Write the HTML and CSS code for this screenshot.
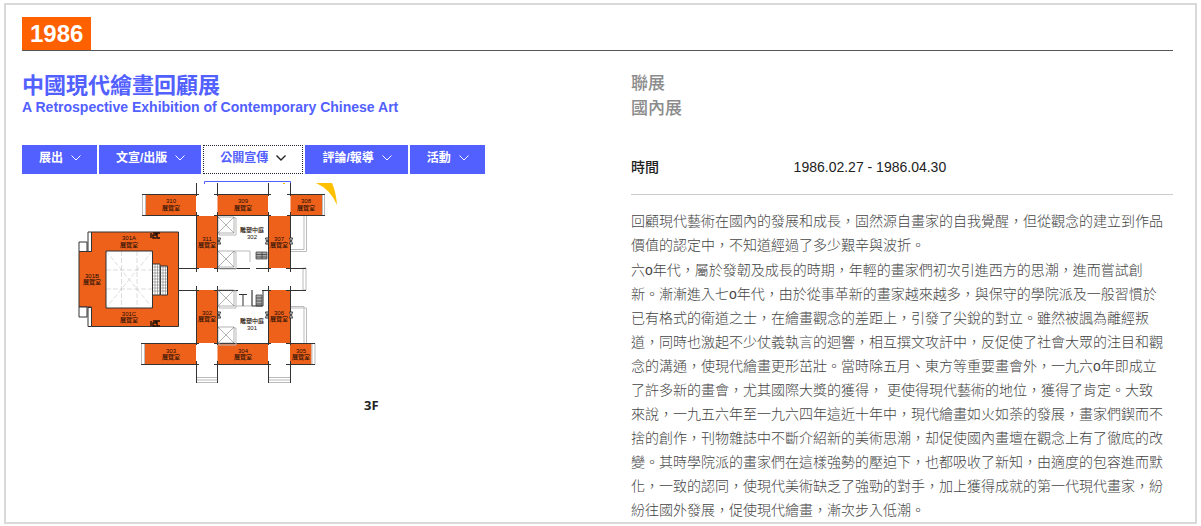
FILE: index.html
```html
<!DOCTYPE html>
<html lang="zh-Hant">
<head>
<meta charset="utf-8">
<title>中國現代繪畫回顧展</title>
<link rel="stylesheet" href="styles.css">
</head>
<body>
<main class="frame">
  <header class="year-bar"><span class="year">1986</span></header>
  <div class="columns">
    <section class="left">
      <h1 class="title">中國現代繪畫回顧展</h1>
      <p class="subtitle">A Retrospective Exhibition of Contemporary Chinese Art</p>
      <nav class="tabs">
        <button class="tab" type="button">展出<svg class="chevron" viewBox="0 0 10 6"><path d="M.5.5 5 5 9.5.5"/></svg></button>
        <button class="tab" type="button">文宣/出版<svg class="chevron" viewBox="0 0 10 6"><path d="M.5.5 5 5 9.5.5"/></svg></button>
        <button class="tab tab-open" type="button">公關宣傳<svg class="chevron" viewBox="0 0 10 6"><path d="M.5.5 5 5 9.5.5"/></svg></button>
        <button class="tab" type="button">評論/報導<svg class="chevron" viewBox="0 0 10 6"><path d="M.5.5 5 5 9.5.5"/></svg></button>
        <button class="tab" type="button">活動<svg class="chevron" viewBox="0 0 10 6"><path d="M.5.5 5 5 9.5.5"/></svg></button>
      </nav>
      <svg class="plan" viewBox="22 174 466 244" role="img" aria-label="3F">
        <defs>
          <g id="lift"><path class="shade" d="M16 1h2v17H1v-2"/><path class="thin" d="M0 0h16v16H0zM0 0l16 16M16 0 0 16"/></g>
          <g id="door"><path class="wall white" d="M-1.500-3h3L.5 0l1 3h-3l1-3z"/></g>
        </defs>
        <path d="M204.500 184v-2.500h86v2.500" class="menu-edge"/>
        <path d="M316 183h16q4 9 5 22-7-16-21-22z" class="beam"/>
        <path d="M283 183h2v1h-2z" class="beam"/>
        <g class="room">
          <path d="M146 194h50v22h-50zM217.500 194H268v22h-50.500zM290.500 194H322v22h-31.500zM196 216h21.500v52H196zM268 216h22v52h-22zM196 290h21.500v53H196zM268 290h22v53h-22zM145 343h51v22h-51zM217.500 343H268v22h-50.500zM290 343h21.500v22H290z"/>
          <path d="M91.500 232h87v94.500h-87V307H79v-55.500h12.500z"/>
        </g>
        <g class="shade"><path d="M142.500 194.500h3v21h-3zM322.500 194.500h2v21h-2zM141.500 343.500h3v21h-3zM312 343.500h3v21h-3zM303 268h3v22h-3zM290 249.500h14V216M290 251.500h16.500V216M290 306.500h14V343M290 308h16.500v35M234 251h16v11M234 306h18v-16"/>
          <path d="M196 377.500h21.500M196 380h21.500M196 382.500h21.500M268 377.500h22M268 380h22M268 382.500h22"/></g>
        <path class="white" d="M106 251h46.500v57H106z"/>
        <path class="dash" d="M106 251l46.500 57M152.500 251 106 308M121.500 251v57M137 251v57M106 270h46.500M106 289h46.500"/>
        <path class="wall" d="M91.500 232h87v94.500h-87V307H79v-55.500h12.500zM106 308V251h46.500v13M106 308h46.500v-13"/>
        <path class="white wall" d="M79 242h8v9.500h-8zM88 232h3.500v19.500H88zM79 307h8v10h-8zM88 307.500h3.500v19H88zM152.500 264h7.500v31h-7.500zM160.500 266h7v29h-7z"/>
        <path class="thin" d="M155 264v31M157.500 264v31M163 266v29M165.500 266v29M153 267h14M153 270h14M153 273h14M153 276h14M153 279h14M153 282h14M153 285h14M153 288h14M153 291h14"/>
        <path class="wall" d="M142 194.500h57M142 215.500h57M214 194.500h57M214 215.500h57M287 194.500h38M287 215.500h38M141 343.500h58M141 364.500h58M214 343.500h57M214 364.500h57M286 343.500h29M286 364.500h29M178.500 268.500H199M178.500 290.500H199M214 268.500h36M256 268.500h15M286 268.500h20M214 290.500h24M262 290.500h9M286 290.500h20M196.500 183v13M196.500 212v60M217.500 183v13M217.500 212v60M268.500 183v13M268.500 212v60M290.500 183v13M290.500 212v60M196.500 286v59M196.500 361v22M217.500 286v59M217.500 361v22M268.500 286v59M268.500 361v22M290.500 286v59M290.500 361v22"/>
        <use href="#lift" x="218" y="217"/><use href="#lift" x="218" y="251"/><use href="#lift" x="218" y="290"/><use href="#lift" x="218" y="327"/>
        <use href="#door" x="219" y="241"/><use href="#door" x="267" y="241"/><use href="#door" x="291" y="241"/>
        <use href="#door" x="219" y="315"/><use href="#door" x="267" y="315"/><use href="#door" x="291" y="315"/>
        <path class="stairs" d="M256 252h11v7h-11zM256 254.500h11M256 257h11M262 252v7M256 295h6v11h-6zM256 298h6M256 301h6M256 304h6"/>
        <path class="wall" d="M239 294.500h8M243 294v12M252 290v16h11v-16"/>
        <path class="mark" d="M151 233v5M153 233h3v2h-3v3h3M160 233h-3v5h3M151 321v5M153 321h3v2h-3v3h3M160 321h-3v5h3"/>
        <g class="label">
          <text x="171" y="203">310</text><text x="171" y="210">展覽室</text>
          <text x="243" y="203">309</text><text x="243" y="210">展覽室</text>
          <text x="306" y="203">308</text><text x="306" y="210">展覽室</text>
          <text x="207" y="241">311</text><text x="207" y="247">展覽室</text>
          <text x="279" y="241">307</text><text x="279" y="247">展覽室</text>
          <text x="252" y="232">雕塑中庭</text><text x="252" y="239">302</text>
          <text x="129" y="240">301A</text><text x="129" y="247">展覽室</text>
          <text x="92" y="278">301B</text><text x="92" y="284">展覽室</text>
          <text x="129" y="316">301C</text><text x="129" y="322">展覽室</text>
          <text x="207" y="315">302</text><text x="207" y="321">展覽室</text>
          <text x="279" y="315">306</text><text x="279" y="321">展覽室</text>
          <text x="252" y="323">雕塑中庭</text><text x="252" y="330">301</text>
          <text x="171" y="353">303</text><text x="171" y="359">展覽室</text>
          <text x="243" y="353">304</text><text x="243" y="359">展覽室</text>
          <text x="301" y="353">305</text><text x="301" y="359">展覽室</text>
        </g>
        <text class="floor" x="364" y="410">3F</text>
      </svg>
    </section>
    <section class="right">
      <div class="kinds">聯展<br>國內展</div>
      <dl class="facts"><dt>時間</dt><dd>1986.02.27 - 1986.04.30</dd></dl>
      <div class="story">
        <p>回顧現代藝術在國內的發展和成長，固然源自畫家的自我覺醒，但從觀念的建立到作品<br>價值的認定中，不知道經過了多少艱辛與波折。</p>
        <p>六o年代，屬於發韌及成長的時期，年輕的畫家們初次引進西方的思潮，進而嘗試創<br>新。漸漸進入七o年代，由於從事革新的畫家越來越多，與保守的學院派及一般習慣於<br>已有格式的衛道之士，在繪畫觀念的差距上，引發了尖銳的對立。雖然被諷為離經叛<br>道，同時也激起不少仗義執言的迴響，相互撰文攻訐中，反促使了社會大眾的注目和觀<br>念的溝通，使現代繪畫更形茁壯。當時除五月、東方等重要畫會外，一九六o年即成立<br>了許多新的畫會，尤其國際大獎的獲得， 更使得現代藝術的地位，獲得了肯定。大致<br>來說，一九五六年至一九六四年這近十年中，現代繪畫如火如荼的發展，畫家們鍥而不<br>捨的創作，刊物雜誌中不斷介紹新的美術思潮，却促使國內畫壇在觀念上有了徹底的改<br>變。其時學院派的畫家們在這樣強勢的壓迫下，也都吸收了新知，由適度的包容進而默<br>化，一致的認同，使現代美術缺乏了強勁的對手，加上獲得成就的第一代現代畫家，紛<br>紛往國外發展，促使現代繪畫，漸次步入低潮。</p>
      </div>
    </section>
  </div>
</main>
</body>
</html>
```
FILE: styles.css
```css
* { box-sizing: border-box; }
body {
  margin: 0;
  padding: 3px 4px 2px;
  background: #fff;
  color: #222;
  font-family: "Liberation Sans", "Noto Sans CJK TC", sans-serif;
}
p, h1, dl, dd { margin: 0; }
.frame {
  min-height: calc(100vh - 5px);
  border: 2px solid #d9d9d9;
  padding: 12px 22px 0 16px;
}
.year-bar { display: flex; border-bottom: 1px solid #555; }
.year {
  padding: 0 8px;
  background: #ff6000;
  color: #fff;
  font-size: 24px;
  font-weight: 700;
  line-height: 33px;
}
.columns { display: grid; grid-template-columns: 609fr 542fr; }
.left { padding-top: 22px; }
.title { color: #5260ff; font-size: 22px; font-weight: 700; line-height: 26px; }
.subtitle { color: #5260ff; font-size: 14px; font-weight: 700; line-height: 16px; }
.tabs { display: flex; gap: 2px; margin-top: 30px; }
.tab {
  display: flex;
  align-items: center;
  gap: 8px;
  height: 29px;
  padding: 0 16px 7px 17px;
  border: 0;
  background: #5260ff;
  color: #fff;
  font: 700 12px "Liberation Sans", "Noto Sans CJK TC", sans-serif;
  white-space: nowrap;
}
.tab-open { padding-right: 17px; background: #fff; color: #5260ff; outline: 1px dotted #223; outline-offset: -1px; }
.chevron { width: 10px; height: 6px; margin-top: 3px; fill: none; stroke: #fff; overflow: visible; }
.tab-open .chevron { stroke: #222; stroke-width: 1.4; }
.plan { display: block; width: 100%; max-width: 466px; }
.menu-edge { fill: none; stroke: #5260ff; }
.beam { fill: #ffc000; }
.room { fill: #ee611b; }
.shade { fill: none; stroke: #bbb; }
.wall { fill: none; stroke: #333; }
.white { fill: #fff; }
.thin { fill: none; stroke: #666; stroke-width: .5; }
.dash { fill: none; stroke: #bbb; stroke-width: .5; stroke-dasharray: 5 2; }
.stairs { fill: #aaa; stroke: #333; stroke-width: .7; }
.mark { fill: none; stroke: #201008; stroke-width: 1.4; }
.label { fill: #1c0c04; font-size: 6px; font-weight: 500; text-anchor: middle; }
.floor { fill: #222; font: 700 13px "Open Sans", sans-serif; }
.right { padding-top: 20px; }
.kinds { color: #8c8c8c; font-size: 17px; font-weight: 500; line-height: 25px; }
.facts {
  display: grid;
  grid-template-columns: 30% 1fr;
  margin-top: 35px;
  padding-bottom: 16px;
  border-bottom: 1px solid #ccc;
  font-size: 14px;
  line-height: 22px;
}
.facts dt { font-weight: 500; }
.story {
  display: grid;
  gap: 1px;
  padding-top: 14px;
  color: #444;
  font-size: 14px;
  font-weight: 300;
  line-height: 24px;
}
```
